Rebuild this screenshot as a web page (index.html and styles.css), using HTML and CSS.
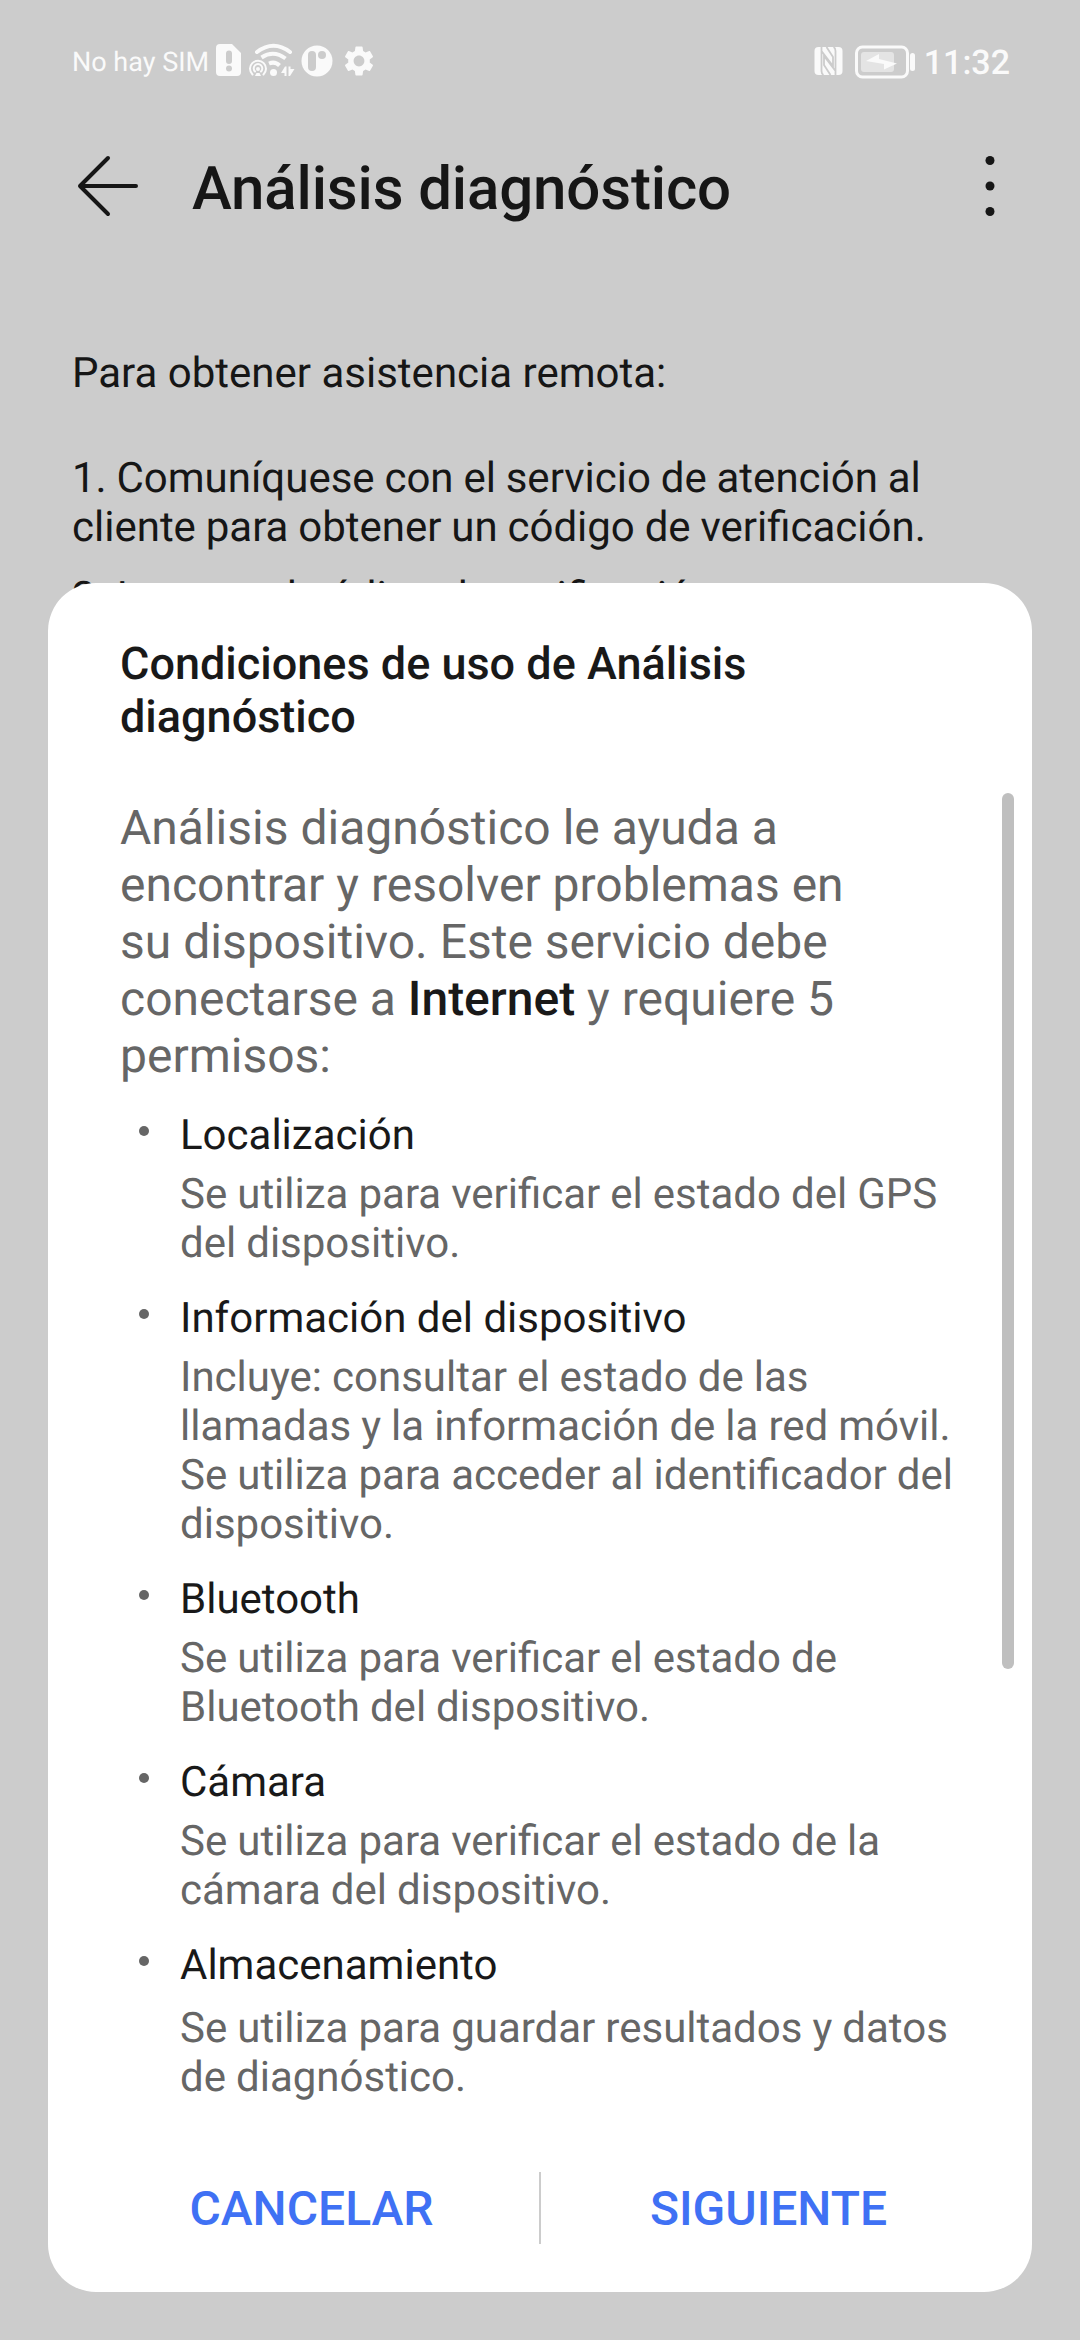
FILE: index.html
```html
<!DOCTYPE html>
<html lang="es">
<head>
  <meta charset="UTF-8" />
  <meta name="viewport" content="width=device-width, initial-scale=1.0"/>
  <title>Análisis diagnóstico</title>
  <link rel="stylesheet" href="styles.css">
</head>
<body>

<div class="screen">

  <div class="status-bar">
    <span class="carrier">No hay SIM</span>
    <svg class="icon-sim" width="26" height="34" viewBox="0 0 26 34">
      <path fill="#fafafa" fill-rule="evenodd" d="M4 1H16L25 10V29Q25 33 21 33H4Q0 33 0 29V5Q0 1 4 1ZM13 7.500Q10 7.500 10 10.500V18Q10 21 13 21Q16 21 16 18V10.500Q16 7.500 13 7.500ZM13 22.500A3 3 0 1 0 13 28.500A3 3 0 1 0 13 22.500Z"/>
    </svg>
    <svg class="icon-wifi" width="46" height="34" viewBox="0 0 46 34">
      <g fill="none" stroke="#fafafa" stroke-linecap="round">
        <path stroke-width="4" d="M8 9Q24.500 -3.500 41 9"/>
        <path stroke-width="4" stroke-linecap="butt" d="M12.500 14.500Q24.500 6.500 36.500 15.500"/>
        <path stroke-width="4" stroke-linecap="butt" d="M20 20.500Q26 18 30.500 22.500"/>
        <path stroke-width="2" d="M3.500 31.500A8 8 0 1 1 14.500 31.500"/>
        <path stroke-width="2" d="M6 28.500A4.300 4.300 0 1 1 12 28.500"/>
      </g>
      <circle cx="9" cy="26" r="2" fill="#fafafa"/>
      <path fill="#fafafa" d="M7.500 30H10.500L12 33H6Z"/>
      <circle cx="24.500" cy="29.500" r="3.500" fill="#fafafa"/>
      <path fill="#fafafa" d="M37.500 23.500V33H35.500V30H32L36 23.500ZM39.500 23.500H41.500V26H45.500L41 33H39.500Z"/>
    </svg>
    <svg class="icon-p" width="32" height="32" viewBox="0 0 32 32">
      <circle cx="16" cy="16" r="15.500" fill="#fafafa"/>
      <rect x="7" y="6" width="8" height="20" rx="4" fill="#cccccc"/>
      <circle cx="21" cy="10" r="4" fill="#cccccc"/>
    </svg>
    <svg class="icon-gear" width="36" height="36" viewBox="0 0 24 24">
      <path fill="#fafafa" d="M19.140 12.940c.04-.3.060-.61.060-.94 0-.32-.02-.64-.07-.94l2.030-1.580c.18-.14.230-.41.120-.61l-1.920-3.320c-.12-.22-.37-.29-.59-.22l-2.390.96c-.5-.38-1.030-.7-1.620-.94l-.36-2.540c-.04-.24-.24-.41-.48-.41h-3.840c-.24 0-.43.170-.47.410l-.36 2.540c-.59.240-1.130.570-1.620.940l-2.390-.96c-.22-.08-.47 0-.59.220L2.740 8.870c-.12.210-.08.470.120.610l2.030 1.580c-.05.300-.09.630-.09.940s.02.640.070.940l-2.030 1.580c-.18.140-.23.410-.12.610l1.920 3.320c.12.220.37.290.59.220l2.390-.96c.5.380 1.030.700 1.620.940l.36 2.540c.05.240.24.410.48.410h3.840c.24 0 .44-.17.470-.41l.36-2.540c.59-.24 1.130-.56 1.620-.94l2.390.96c.22.080.47 0 .59-.22l1.920-3.320c.12-.22.070-.47-.12-.61l-2.010-1.580zM12 15.600c-1.980 0-3.600-1.620-3.600-3.600s1.620-3.600 3.600-3.600 3.600 1.620 3.600 3.600-1.620 3.600-3.600 3.600z"/>
    </svg>

    <div class="status-right">
      <svg class="icon-nfc" width="30" height="30" viewBox="0 0 30 30">
        <rect x="0.500" y="1" width="28" height="28" rx="4" fill="#fafafa"/>
        <path fill="none" stroke="#cccccc" stroke-width="1.800" d="M7.500 1V25Q7.500 28 9.500 29M7.500 5L19 20V11L12.500 1M21.500 29V5Q21.500 2 19.500 1M21.500 25L10 10V19L16.500 29"/>
      </svg>
      <svg class="icon-battery" width="62" height="36" viewBox="0 0 62 36">
        <rect x="1.500" y="3" width="51" height="30" rx="6" fill="none" stroke="#fafafa" stroke-width="3"/>
        <rect x="6" y="8" width="33" height="20" rx="3" fill="#e4e4e4"/>
        <path fill="#fafafa" d="M11 17L24 10V15L42 19.500L29 25.500V20Z"/>
        <rect x="55" y="9" width="5" height="18" rx="2.500" fill="#fafafa"/>
      </svg>
      <span class="clock">11:32</span>
    </div>
  </div>

  <div class="app-bar">
    <svg class="back" width="64" height="64" viewBox="0 0 64 64">
      <path fill="none" stroke="#161616" stroke-width="4" stroke-linecap="round" stroke-linejoin="round" d="M32 4L4 32L32 60M4 32H60"/>
    </svg>
    <h1>Análisis diagnóstico</h1>
    <svg class="more" width="10" height="60" viewBox="0 0 10 60">
      <g fill="#161616">
        <circle cx="5" cy="4.500" r="4.500"/>
        <circle cx="5" cy="30" r="4.500"/>
        <circle cx="5" cy="55.500" r="4.500"/>
      </g>
    </svg>
  </div>

  <div class="content">
    <p class="intro">Para obtener asistencia remota:</p>
    <p class="step">1. Comuníquese con el servicio de atención al cliente para obtener un código de verificación.</p>
    <p class="step">2. Ingrese el código de verificación.</p>
  </div>

  <div class="dialog">
    <h2>Condiciones de uso de Análisis diagnóstico</h2>
    <div class="dialog-body">
      <p class="summary">Análisis diagnóstico le ayuda a encontrar y resolver problemas en su dispositivo. Este servicio debe conectarse a <b>Internet</b> y requiere 5 permisos:</p>
      <ul class="permissions">
        <li>
          <h3>Localización</h3>
          <p>Se utiliza para verificar el estado del GPS del dispositivo.</p>
        </li>
        <li>
          <h3>Información del dispositivo</h3>
          <p>Incluye: consultar el estado de las llamadas y la información de la red móvil. Se utiliza para acceder al identificador del dispositivo.</p>
        </li>
        <li>
          <h3>Bluetooth</h3>
          <p>Se utiliza para verificar el estado de Bluetooth del dispositivo.</p>
        </li>
        <li>
          <h3>Cámara</h3>
          <p>Se utiliza para verificar el estado de la cámara del dispositivo.</p>
        </li>
        <li>
          <h3>Almacenamiento</h3>
          <p>Se utiliza para guardar resultados y datos de diagnóstico.</p>
        </li>
      </ul>
      <div class="scrollbar"></div>
    </div>
    <div class="dialog-actions">
      <button>CANCELAR</button>
      <div class="divider"></div>
      <button>SIGUIENTE</button>
    </div>
  </div>

</div>

</body>
</html>
```

FILE: styles.css
```css
* {
  box-sizing: border-box;
  margin: 0;
  padding: 0;
  font-family: Roboto, sans-serif;
}

body {
  background-color: #cccccc;
  text-rendering: geometricPrecision;
}

.screen {
  position: relative;
  width: 1080px;
  height: 2340px;
  overflow: hidden;
  background-color: #cccccc;
  color: #161616;
}

svg {
  display: block;
  flex-shrink: 0;
}

/* status bar */

.status-bar {
  display: flex;
  align-items: center;
  height: 122px;
  padding: 0 70px 0 72px;
  color: #fafafa;
}

.carrier {
  width: 143px;
  margin-top: 2px;
  font-size: 27px;
  line-height: 32px;
  white-space: nowrap;
}

.icon-sim {
  margin: -2px 0 0 1px;
}

.icon-wifi {
  margin: -2px 0 0 7px;
}

.icon-p {
  margin-left: 6px;
}

.icon-gear {
  margin-left: 8px;
}

.status-right {
  display: flex;
  align-items: center;
  margin-left: auto;
}

.icon-battery {
  margin: 1px 0 0 11px;
}

.clock {
  margin: 3px 0 0 7px;
  font-size: 34px;
  font-weight: 500;
  line-height: 40px;
}

/* title bar */

.app-bar {
  display: flex;
  align-items: center;
  height: 128px;
  padding: 0 85px 0 76px;
}

.app-bar h1 {
  flex: 1;
  margin: 5px 0 0 52px;
  font-size: 60px;
  font-weight: 500;
  line-height: 70px;
  letter-spacing: -0.15px;
}

.content {
  padding: 99px 72px 0;
  font-size: 42px;
  line-height: 49px;
}

.intro {
  margin-bottom: 56px;
}

.step {
  width: 880px;
  margin-bottom: 21px;
  word-spacing: -0.6px;
}

/* terms dialog */

.dialog {
  position: absolute;
  top: 583px;
  left: 48px;
  display: flex;
  flex-direction: column;
  width: 984px;
  height: 1709px;
  padding: 54px 0 48px;
  border-radius: 48px;
  background-color: #fff;
  color: #191919;
}

.dialog h2 {
  padding: 0 72px;
  font-size: 45px;
  font-weight: 500;
  line-height: 53px;
}

.dialog-body {
  position: relative;
  flex: 1;
  padding: 56px 72px 0;
}

.summary {
  width: 740px;
  font-size: 48px;
  line-height: 57px;
  color: #666;
}

.summary b {
  font-weight: 500;
  color: #191919;
}

.permissions {
  padding-top: 27px;
  list-style: none;
}

.permissions li {
  position: relative;
  width: 850px;
  margin-bottom: 26px;
  padding-left: 60px;
  font-size: 42px;
  line-height: 49px;
}

.permissions li::before {
  content: "";
  position: absolute;
  top: 15px;
  left: 19px;
  width: 10px;
  height: 10px;
  border-radius: 50%;
  background-color: #666;
}

.permissions h3 {
  margin-bottom: 10px;
  font-size: 42px;
  font-weight: 400;
}

.permissions li:last-child h3 {
  margin-bottom: 14px;
}

.permissions p {
  color: #666;
  word-spacing: -0.4px;
}

.scrollbar {
  position: absolute;
  top: 50px;
  right: 18px;
  width: 12px;
  height: 876px;
  border-radius: 6px;
  background-color: #bfbfbf;
}

.dialog-actions {
  display: flex;
  align-items: center;
  height: 72px;
  padding: 0 36px;
}

.dialog-actions button {
  flex: 1;
  padding-top: 2px;
  border: none;
  background: none;
  color: #3f71f4;
  font-size: 48px;
  font-weight: 500;
  line-height: 56px;
}

.divider {
  width: 2px;
  height: 72px;
  background-color: #ccc;
}
```
